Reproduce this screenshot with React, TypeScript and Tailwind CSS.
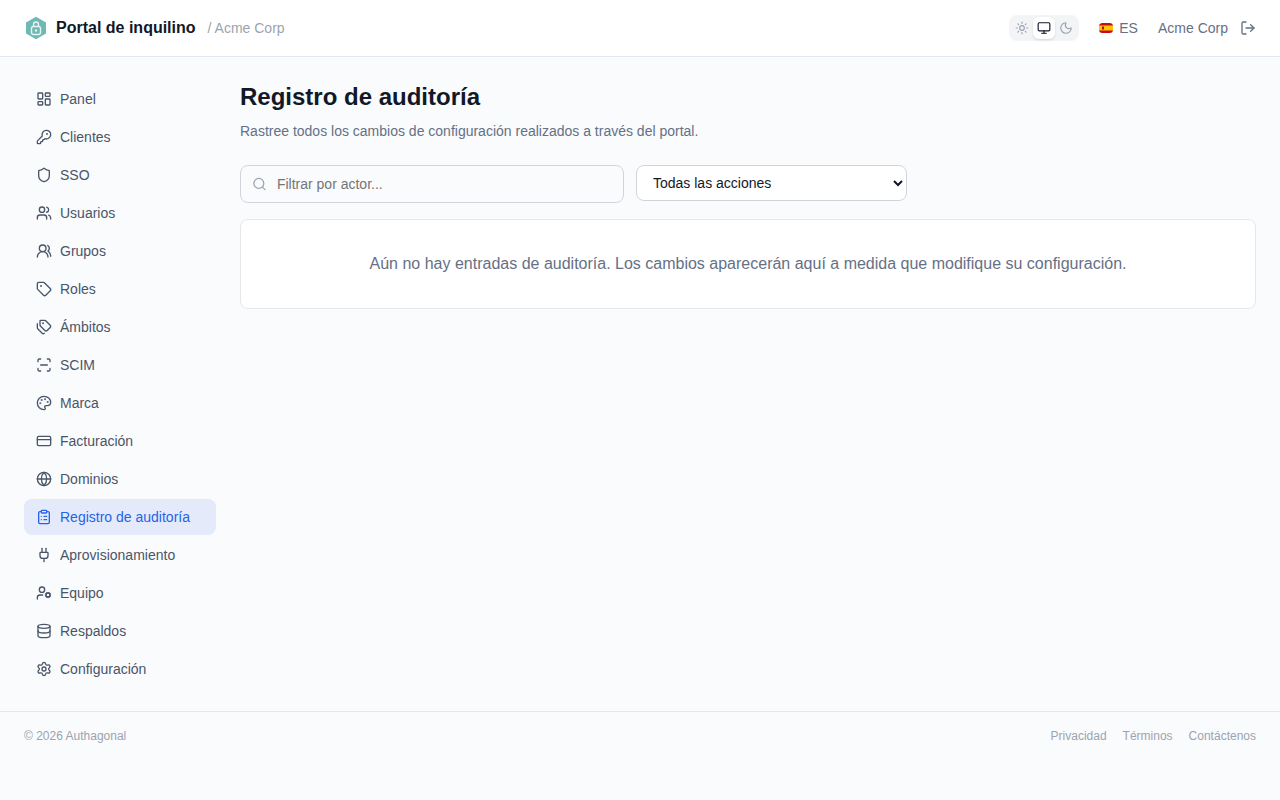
import {
  ClipboardList,
  CreditCard,
  Database,
  Globe,
  KeyRound,
  LayoutDashboard,
  LogOut,
  Monitor,
  Moon,
  Palette,
  Plug,
  ScanLine,
  Search,
  Settings,
  Shield,
  Sun,
  Tag,
  Tags,
  UserCog,
  Users,
  UsersRound,
} from 'lucide-react'

const navItems = [
  { label: 'Panel', icon: LayoutDashboard },
  { label: 'Clientes', icon: KeyRound },
  { label: 'SSO', icon: Shield },
  { label: 'Usuarios', icon: Users },
  { label: 'Grupos', icon: UsersRound },
  { label: 'Roles', icon: Tag },
  { label: 'Ámbitos', icon: Tags },
  { label: 'SCIM', icon: ScanLine },
  { label: 'Marca', icon: Palette },
  { label: 'Facturación', icon: CreditCard },
  { label: 'Dominios', icon: Globe },
  { label: 'Registro de auditoría', icon: ClipboardList, active: true },
  { label: 'Aprovisionamiento', icon: Plug },
  { label: 'Equipo', icon: UserCog },
  { label: 'Respaldos', icon: Database },
  { label: 'Configuración', icon: Settings },
]

function Logo() {
  return (
    <svg className="h-[24px] w-[24px]" viewBox="0 0 24 24">
      <path d="M12 .8 22 6.400v11.200L12 23.200 2 17.600V6.400z" fill="#6fb9b4" />
      <rect x="7.500" y="10.500" width="9" height="8" rx="2" fill="none" stroke="#e6f5f3" strokeWidth="1.400" />
      <path d="M9.500 10.500V8.500a2.500 2.500 0 0 1 5 0v2" fill="none" stroke="#e6f5f3" strokeWidth="1.400" />
      <circle cx="12" cy="14.500" r="1.200" fill="#e6f5f3" />
    </svg>
  )
}

function SpainFlag() {
  return (
    <svg className="h-[10px] w-[14px]" viewBox="0 0 14 10">
      <rect width="14" height="10" rx="3.500" fill="#c60b1e" />
      <rect y="2.500" width="14" height="5" fill="#ffc400" />
      <rect x="3" y="3.500" width="2" height="3" fill="#ad1519" />
    </svg>
  )
}

export default function App() {
  return (
    <div className="min-h-[800px] bg-[#f9fbfd] font-['Liberation_Sans',sans-serif] text-[#111827]">
      <header className="flex h-[57px] items-center justify-between border-b border-[#e2e8f0] bg-white pr-6 pl-6">
        <div className="flex items-center">
          <Logo />
          <span className="ml-2 text-base font-bold text-[#111827]">Portal de inquilino</span>
          <span className="ml-3 text-sm text-[#9ca3af]">/ Acme Corp</span>
        </div>
        <div className="flex items-center">
          <div className="flex h-[26px] items-center rounded-lg bg-[#f3f4f6] px-[2px]">
            <span className="flex h-[22px] w-[22px] items-center justify-center text-[#9ca3af]">
              <Sun size={14} />
            </span>
            <span className="flex h-[22px] w-[22px] items-center justify-center rounded-md bg-white text-[#111827] shadow-sm">
              <Monitor size={14} />
            </span>
            <span className="flex h-[22px] w-[22px] items-center justify-center text-[#9ca3af]">
              <Moon size={14} />
            </span>
          </div>
          <div className="ml-5 flex items-center gap-[6px] text-sm text-[#667085]">
            <SpainFlag />
            <span>ES</span>
          </div>
          <span className="ml-5 text-sm text-[#667085]">Acme Corp</span>
          <LogOut className="ml-3 text-[#667085]" size={16} />
        </div>
      </header>

      <div className="flex">
        <nav className="flex w-[240px] shrink-0 flex-col gap-[2px] p-6 pr-6">
          {navItems.map((item) => {
            const Icon = item.icon
            return (
              <div
                className={
                  item.active
                    ? 'flex h-[36px] items-center gap-[8px] rounded-lg bg-[#e4eaf9] px-3 text-sm text-[#2563eb]'
                    : 'flex h-[36px] items-center gap-[8px] rounded-lg px-3 text-sm text-[#4a5568]'
                }
                key={item.label}
              >
                <Icon size={16} />
                <span>{item.label}</span>
              </div>
            )
          })}
        </nav>

        <main className="min-w-0 flex-1 pt-6 pr-6">
          <h1 className="text-2xl font-bold text-[#111827]">Registro de auditoría</h1>
          <p className="mt-2 mb-6 text-sm text-[#667085]">
            Rastree todos los cambios de configuración realizados a través del portal.
          </p>
          <div className="mb-4 flex items-start gap-3">
            <div className="flex h-[38px] w-[384px] items-center gap-[10px] rounded-lg border border-[#d1d5db] pr-3 pl-[11px]">
              <Search className="text-[#9ca3af]" size={16} />
              <input
                className="w-full bg-transparent text-sm outline-none placeholder:text-[#757575]"
                placeholder="Filtrar por actor..."
              />
            </div>
            <select className="h-[36px] w-[271px] rounded-lg border border-[#d1d5db] bg-white px-3 text-sm text-[#111827]">
              <option>Todas las acciones</option>
            </select>
          </div>
          <div className="rounded-lg border border-[#e5e7eb] bg-white py-8 text-center text-base text-[#667085]">
            Aún no hay entradas de auditoría. Los cambios aparecerán aquí a medida que modifique su configuración.
          </div>
        </main>
      </div>

      <footer className="flex items-center justify-between border-t border-[#e2e8f0] px-6 py-4 text-xs text-[#9ca3af]">
        <span>© 2026 Authagonal</span>
        <div className="flex gap-4">
          <span>Privacidad</span>
          <span>Términos</span>
          <span>Contáctenos</span>
        </div>
      </footer>
    </div>
  )
}
